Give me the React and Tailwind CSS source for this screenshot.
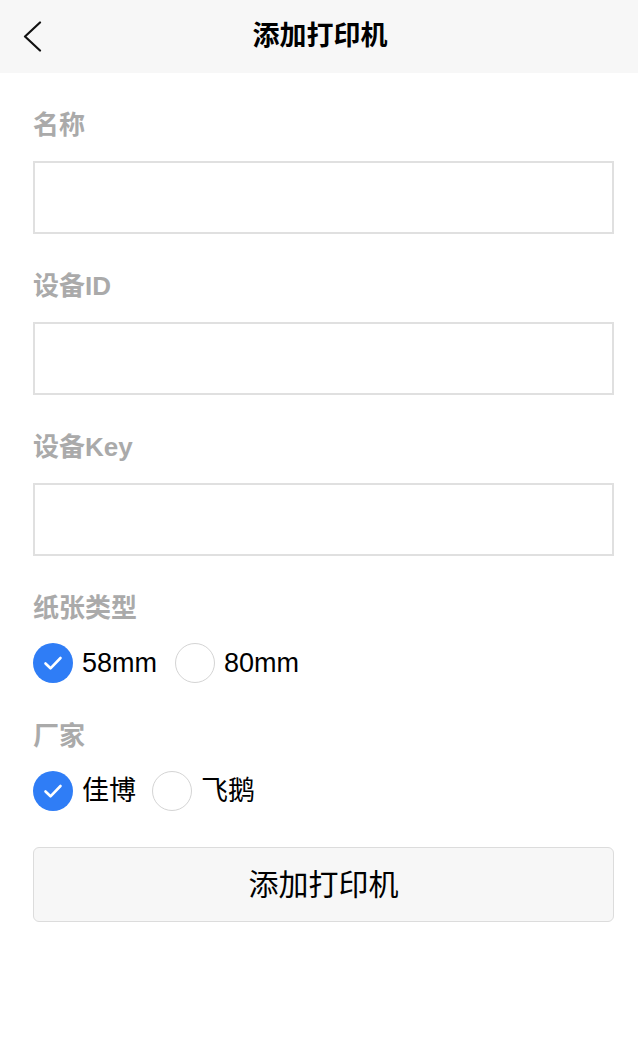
import React, { useState } from 'react';

const font = { fontFamily: '"Liberation Sans", "Noto Sans CJK SC", sans-serif' };

function Radio({ checked, label, onClick }) {
  return (
    <button type="button" onClick={onClick} className="flex items-center gap-[9px]">
      {checked ? (
        <span className="flex h-[40px] w-[40px] items-center justify-center rounded-full bg-[#2f7df6]">
          <svg width="22" height="22" viewBox="0 0 22 22" fill="none">
            <path d="M3.5 11.5l5 4.8 10-10.3" stroke="white" strokeWidth="2.6" strokeLinecap="round" strokeLinejoin="round" />
          </svg>
        </span>
      ) : (
        <span className="h-[40px] w-[40px] rounded-full border-[1.5px] border-[#d4d4d4] bg-white" />
      )}
      <span className="text-[27px] leading-[40px] text-black">{label}</span>
    </button>
  );
}

function Field({ label }) {
  return (
    <div className="pt-[36px]">
      <div className="text-[26px] font-bold leading-[32px] text-[#aaaaaa]">{label}</div>
      <input className="mt-[20px] block h-[73px] w-full border-2 border-[#e0e0e0] bg-white px-3 text-[24px] outline-none" />
    </div>
  );
}

export default function App() {
  const [paper, setPaper] = useState('58');
  const [vendor, setVendor] = useState('jb');

  return (
    <div className="min-h-[1040px] w-[638px] bg-white" style={font}>
      {/* Header */}
      <div className="relative flex h-[73px] items-center justify-center bg-[#f7f7f7]">
        <button type="button" className="absolute left-[17px] top-[16px] p-1">
          <svg width="22" height="32" viewBox="0 0 22 32" fill="none">
            <path d="M19 2.5L4 16.5l15 14" stroke="#111" strokeWidth="2.2" strokeLinecap="round" strokeLinejoin="round" />
          </svg>
        </button>
        <h1 className="pl-[2px] text-[27px] font-bold text-black">添加打印机</h1>
      </div>

      <div className="pl-[33px] pr-[24px]">
        <Field label="名称" />
        <Field label="设备ID" />
        <Field label="设备Key" />

        <div className="pt-[36px]">
          <div className="text-[26px] font-bold leading-[32px] text-[#aaaaaa]">纸张类型</div>
          <div className="mt-[19px] flex items-center gap-[18px]">
            <Radio checked={paper === '58'} label="58mm" onClick={() => setPaper('58')} />
            <Radio checked={paper === '80'} label="80mm" onClick={() => setPaper('80')} />
          </div>
        </div>

        <div className="pt-[37px]">
          <div className="text-[26px] font-bold leading-[32px] text-[#aaaaaa]">厂家</div>
          <div className="mt-[19px] flex items-center gap-[16px]">
            <Radio checked={vendor === 'jb'} label="佳博" onClick={() => setVendor('jb')} />
            <Radio checked={vendor === 'fe'} label="飞鹅" onClick={() => setVendor('fe')} />
          </div>
        </div>

        <button
          type="button"
          className="mt-[36px] flex h-[75px] w-full items-center justify-center rounded-[6px] border border-[#dcdcdc] bg-[#f7f7f7] text-[30px] text-black"
        >
          添加打印机
        </button>
      </div>
    </div>
  );
}
